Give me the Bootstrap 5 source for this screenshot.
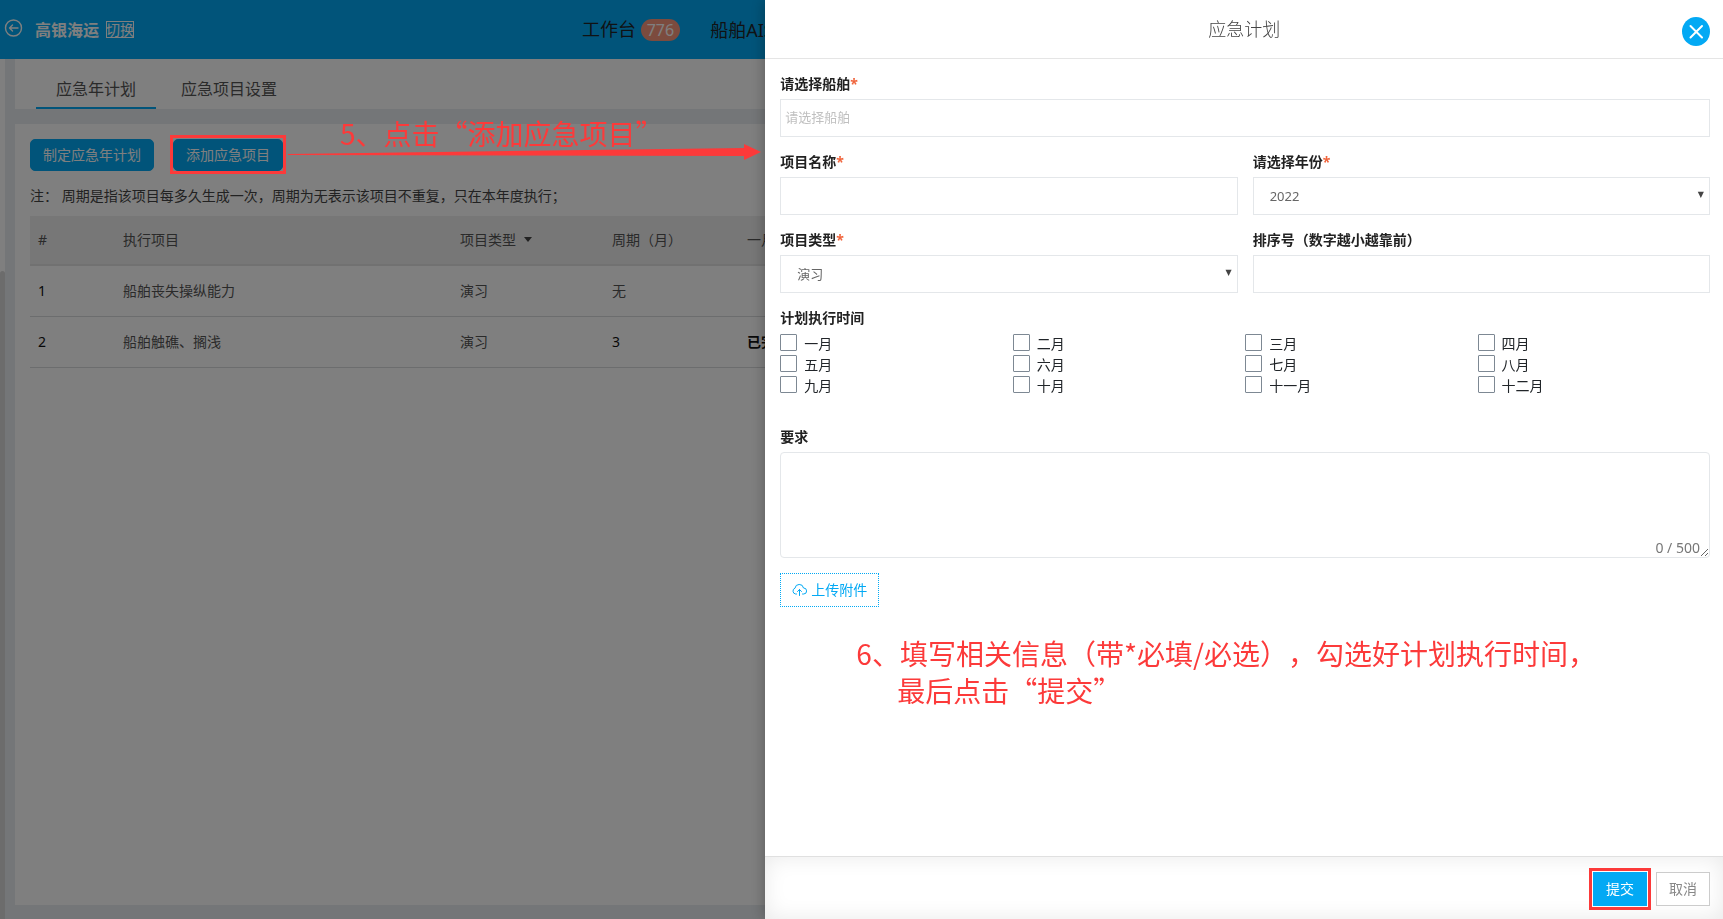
<!DOCTYPE html>
<html lang="zh-CN">
<head>
<meta charset="utf-8">
<meta name="viewport" content="width=device-width, initial-scale=1">
<title>应急计划</title>
<link rel="stylesheet" href="https://cdn.jsdelivr.net/npm/bootstrap@5.3.0/dist/css/bootstrap.min.css">
<style>
  :root { --brand: #03a9f4; --mark: #fc3a3a; --line: #e4e7ea; }
  body { font-family: "Noto Sans", "Noto Sans CJK SC", sans-serif; font-size: 14px; line-height: 20px; color: #212529; background: #e9edf1; min-height: 100vh; overflow: hidden; }
  a { text-decoration: none; }
  .topbar { background: var(--brand); height: 59px; color: #fff; font-size: 18px; }
  .topbar .back-link { color: #fff; line-height: 0; margin-top: -4px; }
  .brand-name { font-size: 16px; font-weight: 700; }
  .switch-btn { display: flex; justify-content: center; border: 1px solid #fff; color: #fff; background: none; font-size: 14px; line-height: 15px; padding: 0; margin-left: 7px; width: 28px; height: 17px; white-space: nowrap; }
  .top-menu { margin-left: 448px; gap: 30px; }
  .top-menu a { color: #212529; white-space: nowrap; }
  .count-pill { background: #f9967c; color: #fff; font-size: 16px; line-height: 22px; padding: 0 6px; }
  .side-strip { width: 5px; background: #fff; }
  .side-thumb { margin-top: 212px; background: #d9d9d9; border-radius: 3px 3px 0 0; }
  .work-area { padding: 0 0 14px 10px; gap: 15px; }
  .panel { background: #fff; }
  .plan-panel { padding: 15px 0 15px 15px; }
  .tab-row { height: 50px; padding-left: 21px; gap: 5px; font-size: 16px; }
  .tab-row a { color: #555; padding: 0 20px; line-height: 61px; border-bottom: 2px solid transparent; height: 50px; }
  .tab-row a.active { border-color: var(--brand); }
  .btn-brand { --bs-btn-bg: var(--brand); --bs-btn-color: #fff; --bs-btn-border-color: var(--brand); --bs-btn-hover-bg: #0398dc; --bs-btn-hover-color: #fff; --bs-btn-font-size: 14px; --bs-btn-line-height: 20px; --bs-btn-border-radius: 5px; --bs-btn-padding-y: 5px; --bs-btn-padding-x: 12px; }
  .tool-row { gap: 19px; margin-bottom: 15px; }
  .tool-row .btn { --bs-btn-line-height: 20px; }
  .ring { position: relative; }
  .ring::after { content: ""; position: absolute; inset: -4px -3px -3px; border: 3px solid var(--mark); z-index: 1050; pointer-events: none; }
  .plan-note { margin-bottom: 10px; color: #444; }
  .marked { outline: 3px solid var(--mark); outline-offset: 1px; }
  .plan-table { table-layout: fixed; width: 1680px; --bs-table-color: #555; }
  .plan-table th, .plan-table td { padding: 0 8px; height: 51px; vertical-align: middle; font-weight: 400; border-bottom: 1px solid #d9dadc; }
  .plan-table thead th { background: #eee; height: 49px; border-bottom: 2px solid #e3e3e3; color: #555; }
  .plan-table td.num { color: #111; }
  .caret { display: inline-block; border: 4px solid transparent; border-top: 5px solid #444; border-bottom: 0; margin-left: 8px; vertical-align: 3px; }
  .shade { position: fixed; inset: 0; background: rgba(0,0,0,.5); z-index: 1040; }
  .offcanvas.drawer { --bs-offcanvas-width: calc(55% + 10px); --bs-offcanvas-border-width: 0; box-shadow: 0 0 14px rgba(0,0,0,.3); --bs-offcanvas-zindex: 1060; transition: none; }
  .drawer-head { height: 59px; border-bottom: 1px solid #e5e5e5; position: relative; }
  .drawer-head h1 { font-size: 18px; line-height: 28px; font-weight: 300; margin: 0; color: #444; }
  .close-x { position: absolute; right: 13px; top: 17px; width: 28px; height: 29px; padding: 0; border: 0; background: var(--brand); border-radius: 50%; line-height: 0; }
  .drawer-body { padding: 15px 13px 0 15px; }
  .form-grid { --bs-gutter-x: 15px; --bs-gutter-y: 15px; margin-bottom: 15px; }
  .fld-label { display: block; font-size: 14px; font-weight: 700; line-height: 20px; margin-bottom: 5px; color: #222; }
  .fld-label span { color: #f0643c; }
  .fld { display: block; width: 100%; height: 38px; border: 1px solid var(--line); border-radius: 0; background: #fff; padding: 0 4px 2px; font-size: 13px; color: #666; }
  .fld::placeholder { color: #c0c0c0; opacity: 1; }
  select.fld { appearance: none; padding: 0 16px; }
  .pick { position: relative; }
  .pick::after { content: "▼"; position: absolute; right: 6px; top: 8px; font: 8px/20px "DejaVu Sans", sans-serif; color: #444; pointer-events: none; }
  .month-set { margin-bottom: 30px; }
  .months { padding-top: 1px; }
  .months label { display: flex; gap: 7px; height: 21px; line-height: 19px; }
  .months input { appearance: none; width: 17px; height: 17px; margin: 0; border: 1px solid #7d8893; border-radius: 1px; background: #fff; }
  .note-box { position: relative; margin-bottom: 15px; }
  .note-box textarea { height: 106px; border-radius: 4px; resize: vertical; }
  .note-box output { position: absolute; right: 10px; bottom: 0; color: #777; }
  .upload-btn { border: 1px dotted var(--brand); background: #fff; color: var(--brand); height: 34px; padding: 0 11px; }
  .drawer-foot { height: 63px; border-top: 1px solid #e0e0e0; padding: 2px 13px 0 0; gap: 9px; box-shadow: inset 0 0 22px rgba(0,0,0,.09); }
  .drawer-foot .btn { --bs-btn-border-radius: 0; --bs-btn-padding-x: 12px; --bs-btn-padding-y: 6px; --bs-btn-font-size: 14px; --bs-btn-line-height: 20px; }
  .btn-plain { --bs-btn-color: #888; --bs-btn-border-color: #ccc; --bs-btn-bg: #fff; }
  .callout-text { font-family: "Noto Sans CJK SC", sans-serif; font-size: 28px; line-height: 37px; color: var(--mark); white-space: nowrap; margin: 0; text-spacing-trim: space-all; }
  .callout-open { position: fixed; left: 340px; top: 115px; z-index: 1050; }
  .callout-arrow { position: fixed; left: 287px; top: 143px; z-index: 1070; }
  .callout-fill { padding: 28px 0 0 76px; }
  .callout-fill span { display: block; padding-left: 41px; }
</style>
</head>
<body class="d-flex flex-column">
<header class="topbar d-flex align-items-center flex-shrink-0">
  <a class="back-link ms-1" href="#" aria-label="返回">
    <svg width="19" height="18" viewBox="0 0 19 18" fill="none" stroke="currentColor" stroke-width="1.4" stroke-linecap="round" stroke-linejoin="round"><circle cx="9.5" cy="9" r="8"/><path d="M14 9H5.5M8.5 6l-3 3 3 3"/></svg>
  </a>
  <span class="brand-name ms-2 ps-1">高银海运</span>
  <button class="switch-btn" type="button">切换</button>
  <nav class="top-menu d-flex align-items-center">
    <a href="#">工作台 <span class="count-pill rounded-pill d-inline-block">776</span></a>
    <a href="#">船舶AIS</a>
  </nav>
</header>
<div class="d-flex flex-grow-1">
  <aside class="side-strip d-flex flex-column"><div class="side-thumb flex-grow-1"></div></aside>
  <main class="work-area d-flex flex-column flex-grow-1 overflow-hidden">
    <nav class="tab-row panel d-flex">
      <a class="active" href="#">应急年计划</a>
      <a href="#">应急项目设置</a>
    </nav>
    <section class="panel plan-panel flex-grow-1">
      <div class="tool-row d-flex">
        <button class="btn btn-brand" type="button">制定应急年计划</button>
        <div class="ring"><button class="btn btn-brand" type="button">添加应急项目</button></div>
      </div>
      <p class="plan-note">注： 周期是指该项目每多久生成一次，周期为无表示该项目不重复，只在本年度执行；</p>
      <table class="table plan-table mb-0">
        <colgroup><col width="85"><col width="337"><col width="152"><col width="135"><col></colgroup>
        <thead><tr><th>#</th><th>执行项目</th><th>项目类型<span class="caret"></span></th><th>周期（月）</th><th>一月</th></tr></thead>
        <tbody>
          <tr><td class="num">1</td><td>船舶丧失操纵能力</td><td>演习</td><td>无</td><td></td></tr>
          <tr><td class="num">2</td><td>船舶触礁、搁浅</td><td>演习</td><td class="num">3</td><td class="num fw-bold">已完成</td></tr>
        </tbody>
      </table>
    </section>
  </main>
</div>

<div class="shade"></div>
<p class="callout-text callout-open">5、点击“添加应急项目”</p>
<svg class="callout-arrow" width="474" height="18" viewBox="0 0 474 18" fill="#fc3a3a"><path d="M1 11 457 5V1l17 8-17 8v-4L1 12z"/></svg>

<div class="offcanvas offcanvas-end show drawer" tabindex="-1" data-bs-backdrop="false" data-bs-scroll="true" aria-labelledby="drawerTitle">
  <div class="drawer-head d-flex align-items-center justify-content-center flex-shrink-0">
    <h1 id="drawerTitle">应急计划</h1>
    <button class="close-x" type="button" aria-label="关闭">
      <svg width="28" height="29" viewBox="0 0 28 29" stroke="#fff" stroke-width="2" stroke-linecap="round"><path d="M8.5 9l11.5 11.5M20 9L8.5 20.5"/></svg>
    </button>
  </div>
  <form class="drawer-body flex-grow-1">
    <div class="row form-grid">
      <div class="col-12"><label class="fld-label" for="ship">请选择船舶<span>*</span></label><input class="fld" id="ship" type="text" placeholder="请选择船舶"></div>
      <div class="col-6"><label class="fld-label" for="pname">项目名称<span>*</span></label><input class="fld" id="pname" type="text"></div>
      <div class="col-6"><label class="fld-label" for="year">请选择年份<span>*</span></label><div class="pick"><select class="fld" id="year"><option>2022</option></select></div></div>
      <div class="col-6"><label class="fld-label" for="ptype">项目类型<span>*</span></label><div class="pick"><select class="fld" id="ptype"><option>演习</option></select></div></div>
      <div class="col-6"><label class="fld-label" for="order">排序号（数字越小越靠前）</label><input class="fld" id="order" type="text"></div>
    </div>
    <fieldset class="month-set">
      <legend class="fld-label">计划执行时间</legend>
      <div class="row g-0 months">
        <div class="col-3"><label><input type="checkbox"><span>一月</span></label></div>
        <div class="col-3"><label><input type="checkbox"><span>二月</span></label></div>
        <div class="col-3"><label><input type="checkbox"><span>三月</span></label></div>
        <div class="col-3"><label><input type="checkbox"><span>四月</span></label></div>
        <div class="col-3"><label><input type="checkbox"><span>五月</span></label></div>
        <div class="col-3"><label><input type="checkbox"><span>六月</span></label></div>
        <div class="col-3"><label><input type="checkbox"><span>七月</span></label></div>
        <div class="col-3"><label><input type="checkbox"><span>八月</span></label></div>
        <div class="col-3"><label><input type="checkbox"><span>九月</span></label></div>
        <div class="col-3"><label><input type="checkbox"><span>十月</span></label></div>
        <div class="col-3"><label><input type="checkbox"><span>十一月</span></label></div>
        <div class="col-3"><label><input type="checkbox"><span>十二月</span></label></div>
      </div>
    </fieldset>
    <label class="fld-label" for="need">要求</label>
    <div class="note-box">
      <textarea class="fld" id="need" maxlength="500"></textarea>
      <output for="need">0 / 500</output>
    </div>
    <button class="upload-btn d-flex align-items-center gap-1" type="button">
      <svg width="15" height="14" viewBox="0 0 15 14" fill="none" stroke="currentColor" stroke-width="1" stroke-linecap="round" stroke-linejoin="round"><path d="M4.5 11H3.6A3 3 0 0 1 3 5.200 4.300 4.300 0 0 1 11.500 5a3 3 0 0 1 .2 6h-1.200M7.500 12.500v-6M5.500 8.500l2-2 2 2"/></svg>
      上传附件
    </button>
    <p class="callout-text callout-fill">6、填写相关信息（带*必填/必选），勾选好计划执行时间，<span>最后点击“提交”</span></p>
  </form>
  <div class="drawer-foot d-flex align-items-center justify-content-end flex-shrink-0">
    <button class="btn btn-brand marked" type="button">提交</button>
    <button class="btn btn-plain" type="button">取消</button>
  </div>
</div>
<script src="https://cdn.jsdelivr.net/npm/bootstrap@5.3.0/dist/js/bootstrap.bundle.min.js"></script>
</body>
</html>
